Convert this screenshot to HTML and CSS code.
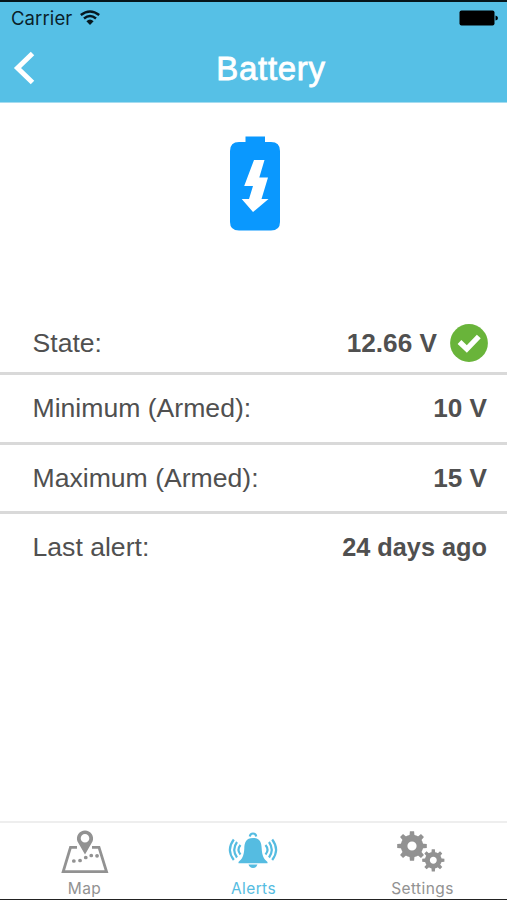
FILE: index.html
```html
<!DOCTYPE html>
<html lang="en">
<head>
<meta charset="utf-8">
<title>Battery</title>
<link rel="stylesheet" href="styles.css">
</head>
<body>
<div class="screen">
  <header class="header">
    <div class="status">
      <span class="carrier">Carrier</span>
      <svg class="wifi" width="20" height="15" viewBox="0 0 20 15" fill="none" stroke="#061820" stroke-width="2.500">
        <path d="M.8 5Q10-2 19.200 5M4 8.500Q10 3.400 16 8.500"/>
        <path d="M6.400 11.200Q10 7.800 13.600 11.200L10 15Z" fill="#061820" stroke="none"/>
      </svg>
      <svg class="power" width="39" height="16" viewBox="0 0 39 16">
        <rect x=".5" y=".5" width="35" height="15" rx="2"/>
        <path d="M36.500 5.500Q39 6 39 8T36.500 10.500Z"/>
      </svg>
    </div>
    <div class="nav">
      <svg class="back" width="24" height="34" viewBox="0 0 24 34"><path d="M20.500 2.500L5.500 17L20.500 31.500" fill="none" stroke="#fff" stroke-width="5"/></svg>
      <h1>Battery</h1>
    </div>
  </header>
  <main>
    <div class="hero">
      <svg width="50" height="95" viewBox="0 0 50 95">
        <path fill="#0a98fe" d="M15.500 .5H35V6H41Q50 6 50 15V86Q50 94.500 41 94.500H9Q0 94.500 0 86V15Q0 6 9 6H15.500Z"/>
        <path fill="#fff" d="M24 24H34.500L29.300 41.500H38L31.500 63H38.500L23 76L11.700 63H19L23 50H14.200Z"/>
      </svg>
    </div>
    <dl class="rows">
      <div class="row first"><dt>State:</dt><dd class="reading">12.66 V
        <svg width="38" height="38" viewBox="0 0 38 38"><circle cx="19" cy="19" r="18.900" fill="#69b43a"/><path d="M9.500 18L16.800 25L28.800 12.500" fill="none" stroke="#fff" stroke-width="5.400"/></svg></dd></div>
      <div class="row"><dt>Minimum (Armed):</dt><dd class="reading">10 V</dd></div>
      <div class="row"><dt>Maximum (Armed):</dt><dd class="reading">15 V</dd></div>
      <div class="row last"><dt>Last alert:</dt><dd>24 days ago</dd></div>
    </dl>
  </main>
  <nav class="tabs">
    <div class="tab map">
      <svg width="48" height="44" viewBox="0 0 48 44">
        <path d="M16 7.300H9.500L2.200 31.700H45.500L38 7.300H31" fill="none" stroke="currentColor" stroke-width="2.800"/>
        <path fill="currentColor" fill-rule="evenodd" d="M24-9.500A8 8 0 0 0 16.500 1.500L24 14.500L31.500 1.500A8 8 0 0 0 24-9.500ZM24-6A4.300 4.300 0 1 1 24 2.600A4.300 4.300 0 1 1 24-6Z"/>
        <path d="M12.800 21H12.900M19 20.500H19.100M24.700 17.500H24.800M30.200 15.500H30.300M36 15.800H36.100" fill="none" stroke="currentColor" stroke-width="3.700" stroke-linecap="round"/>
      </svg>
      <span>Map</span>
    </div>
    <div class="tab active">
      <svg width="50" height="44" viewBox="0 0 50 44">
        <path fill="currentColor" d="M25 9C18 9 16.500 13.500 16.300 19.500C16 27 14 30 10.500 33V34.200H39.500V33C36 30 34 27 33.700 19.500C33.500 13.500 32 9 25 9ZM20.500 35.600H29.500Q28.500 39 25 39T20.500 35.600Z"/>
        <g fill="none" stroke="currentColor" stroke-width="2.200">
          <path d="M21.800 7.500Q22.200 4.500 25 4.500T28.200 7.500"/>
          <path d="M12.500 16Q8.500 20.800 12.500 25.500M9 13Q3.500 20.800 9 28.500M5.800 10.500Q-2 20.800 5.800 31"/>
          <path d="M37.500 16Q41.500 20.800 37.500 25.500M41 13Q46.500 20.800 41 28.500M44.200 10.500Q52 20.800 44.200 31"/>
        </g>
      </svg>
      <span>Alerts</span>
    </div>
    <div class="tab settings">
      <svg width="48" height="44" viewBox="0 0 48 44">
        <defs>
          <g id="teeth"><path id="pair" d="M-2.600-9L-2.100-14.800H2.100L2.600-9ZM-2.600 9L-2.100 14.800H2.100L2.600 9Z"/><use href="#pair" transform="rotate(45)"/><use href="#pair" transform="rotate(90)"/><use href="#pair" transform="rotate(135)"/></g>
          <g id="gear" fill="currentColor"><circle r="7.900" fill="none" stroke="currentColor" stroke-width="6.600"/><use href="#teeth"/></g>
        </defs>
        <use href="#gear" transform="translate(15 17)"/>
        <use href="#gear" transform="translate(36.300 31.300) scale(.75)"/>
      </svg>
      <span>Settings</span>
    </div>
  </nav>
</div>
</body>
</html>
```
FILE: styles.css
```css
* { box-sizing: border-box; }
body { margin: 0; background: #fff; font-family: "Liberation Sans", Arial, sans-serif; }
.screen { height: 900px; display: flex; flex-direction: column; border-bottom: 1px solid #222; overflow: hidden; }
.header { height: 103px; background: #56c0e6; border-top: 2px solid #06151b; border-bottom: 1px solid #a5dcf0; }
.status { height: 32px; display: flex; align-items: center; padding: 0 9px 0 11px; color: #0a2029; }
.carrier { font: 18.5px/22px Inter, sans-serif; width: 60px; letter-spacing: .1px; white-space: nowrap; }
.wifi { margin: -2px 0 0 9px; }
.power { margin-left: auto; }
.nav { height: 68px; display: grid; grid-template-columns: 60px 1fr 60px; align-items: center; }
.back { margin-left: 12px; }
h1 { margin: 2px 0 0 35px; text-align: center; color: #fff; font-size: 33px; line-height: 40px; font-weight: 400; letter-spacing: .7px; -webkit-text-stroke: .8px #fff; }
main { flex: 1; }
.hero { height: 210px; padding-top: 33px; display: flex; justify-content: center; }
.hero svg { margin-left: 3px; }
.rows { margin: 0; color: #505050; }
.row { height: 69.5px; display: flex; align-items: center; justify-content: space-between; padding: 0 20px 0 32.5px; border-bottom: 3px solid #d9d9d9; }
.row.first { height: 62px; padding-right: 19px; }
.row.last { height: 66px; border: 0; }
dt { font-size: 26.6px; line-height: 32px; }
dd { margin: 0; display: flex; align-items: center; gap: 13px; font-size: 25.3px; line-height: 32px; font-weight: 700; }
.reading { font-size: 26.2px; }
.tabs { height: 78px; border-top: 2px solid #eee; display: grid; grid-template-columns: repeat(3, 1fr); }
.tab { display: flex; flex-direction: column; align-items: center; color: #929292; padding-top: 6px; }
.tab svg { overflow: visible; margin-left: -1px; }
.map svg { margin: 11px 0 -11px 1px; }
.settings svg { margin-left: -3px; }
.tab span { font: 15.5px/20px Inter, sans-serif; letter-spacing: .4px; margin-top: 6px; }
.tab.active { color: #55bce1; }
```
